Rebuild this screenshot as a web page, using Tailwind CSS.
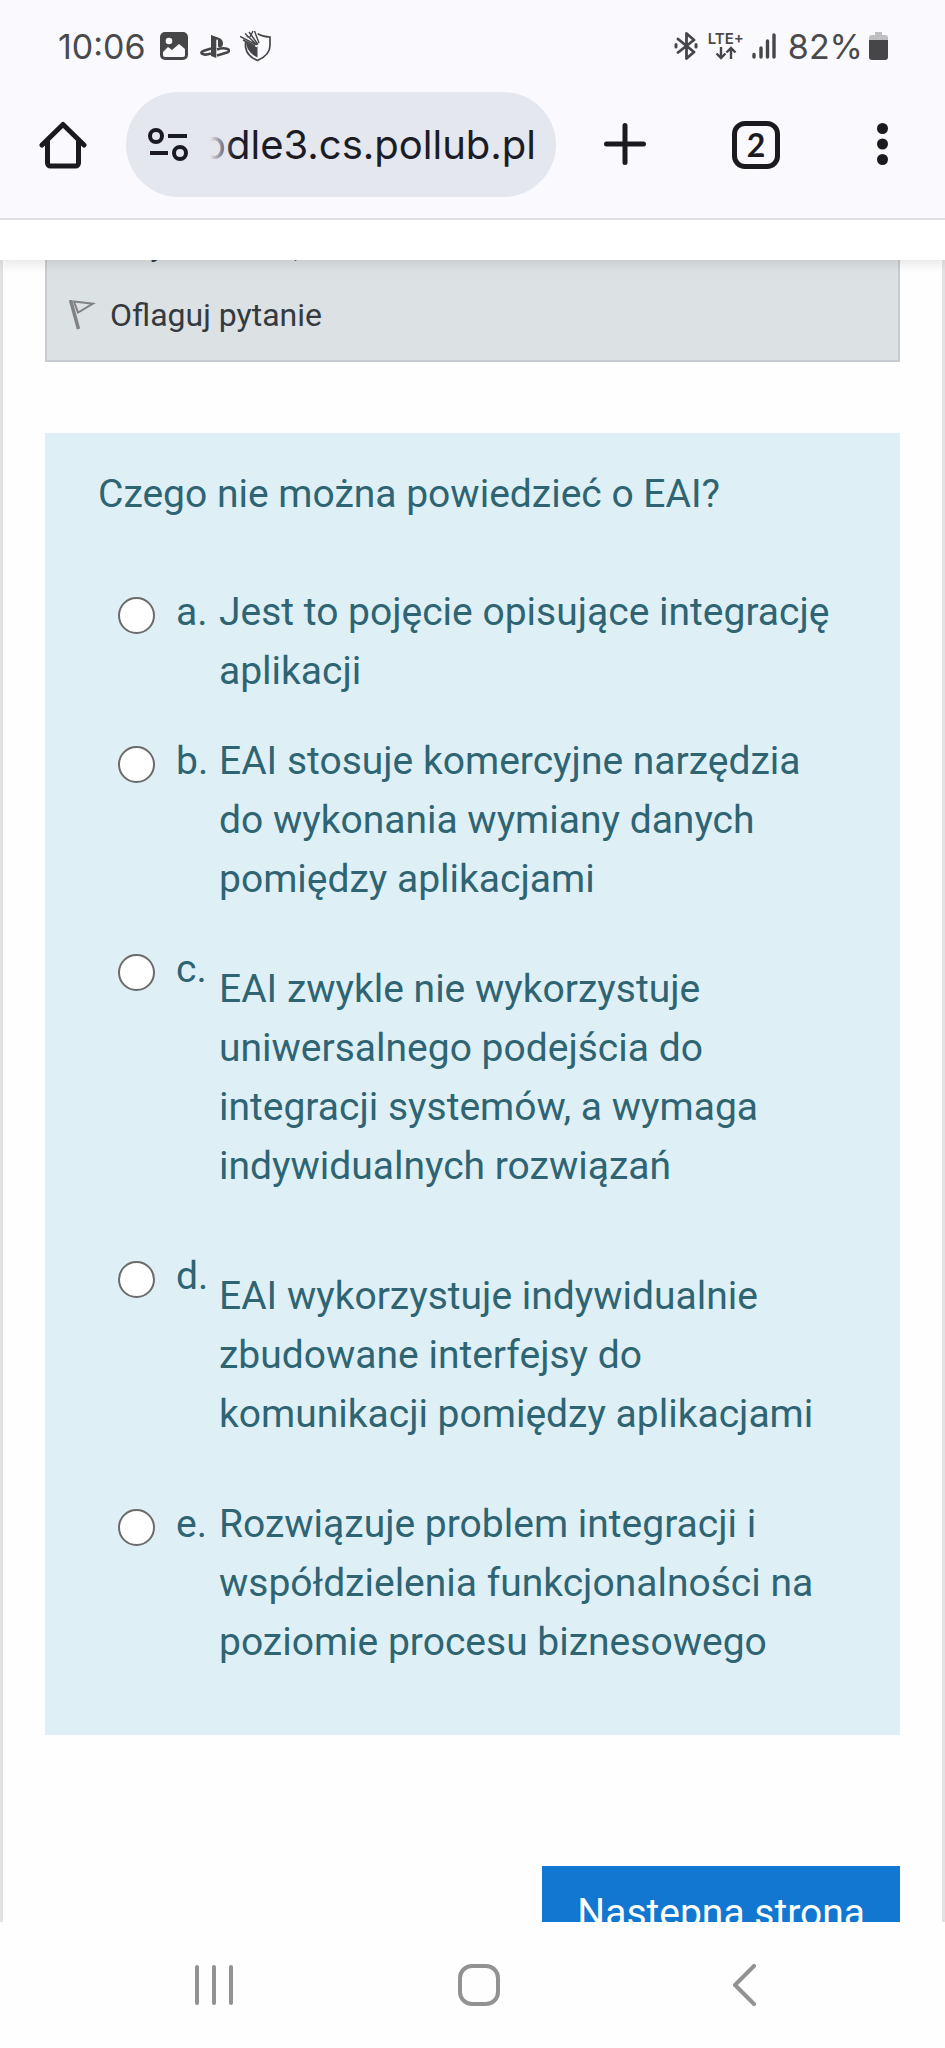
<!DOCTYPE html>
<html lang="pl">
<head>
<meta charset="utf-8">
<meta name="viewport" content="width=device-width, initial-scale=1">
<title>Quiz</title>
<script src="https://cdn.jsdelivr.net/npm/@tailwindcss/browser@4"></script>
</head>
<body class="flex h-screen flex-col overflow-hidden bg-[#fefefe] font-[Roboto,sans-serif]">

<header class="shrink-0 border-b-2 border-[#e2e2ea] bg-[#faf9fe]">
  <!-- Status bar -->
  <div class="flex h-[92px] items-center pr-[57px] pl-[58px] font-[Inter,sans-serif] text-[34px] text-[#4a4a4c]">
    <span>10:06</span>
    <svg class="ml-3.5 h-7 w-7" viewBox="0 0 28 28"><rect width="28" height="28" rx="5" fill="#464648"/><circle cx="9" cy="9" r="3.300" fill="#faf9fe"/><path d="M3 20l5-5 4 3 7-6 6 5v6a2 2 0 0 1-2 2H5a2 2 0 0 1-2-2z" fill="#faf9fe"/></svg>
    <svg class="ml-3 h-7 w-[30px]" viewBox="0 0 30 28"><path d="M11 3l7 2.400c3.500 1.200 5 3 5 6s-2 4.600-5 3.300V8.500c0-1.500-1.700-1.500-1.700 0V26L11 24z" fill="#464648"/><path d="M11 16.500l-7 2.300c-4 1.500-3 3.600 1 3.800 2.500.1 4-.3 6-1M17 17.500c4-1.600 8-1.500 10.500-.5 2.500 1 1.500 2.700-.5 3.500L17 23.500" fill="none" stroke="#464648" stroke-width="2.600"/></svg>
    <svg class="ml-2.5 h-8 w-8" viewBox="0 0 32 32" fill="none"><path d="M5.500 11v6c1 6 5.500 11 12 13.500C25.500 27 30 22.500 30 15.500V7c-4.500 0-8.500-1-12-3-3.500 2-8 3.500-12.500 3.500z" stroke="#464648" stroke-width="1.700"/><path d="M6 11l11.500 5v11.500C11 24.500 6 19 6 11z" fill="#464648"/><path d="M1.500 7.500L18 15M8 3l9 12M14.500 2l3.500 13" stroke="#faf9fe" stroke-width="5"/><path d="M0 6.500l16 8M5 3.500l12 11.500M9 2l9 12.500M14.500 1l4.500 12M3 10l12 6M13 1l-3 6" stroke="#464648" stroke-width="1.400"/></svg>

    <svg class="ml-auto h-7 w-6" viewBox="0 0 24 28" fill="none" stroke="#464648" stroke-width="2.800" stroke-linejoin="round" stroke-linecap="round"><path d="M4 7l16 13-7.500 6.500V1.500L20 8 4 20.500"/><path d="M2 12.500v2.500M22 12.500v2.500" stroke-width="3"/></svg>
    <div class="ml-2.5 flex w-9 flex-col items-center">
      <span class="h-3.5 text-[15px] leading-[14px] font-semibold">LTE+</span>
      <svg class="h-3.5 w-[22px]" viewBox="0 0 22 14" fill="none" stroke="#464648" stroke-width="2.400"><path d="M6 1v11M1.500 7.500L6 12l4.500-4.500M16 13V2M11.500 6.500L16 2l4.500 4.500"/></svg>
    </div>
    <svg class="ml-2 h-7 w-6" viewBox="0 0 24 28" stroke="#464648" stroke-width="3.400" stroke-linecap="round"><path d="M2 22.500v2.500M9 16v9M15.500 9v16M22 3v22"/></svg>
    <span class="ml-3">82%</span>
    <svg class="ml-1.5 h-7 w-[19px]" viewBox="0 0 19 28"><path d="M6 0h7v3h3a3 3 0 0 1 3 3v3H0V6a3 3 0 0 1 3-3h3z" fill="#bfbfc2"/><path d="M0 8h19v17a3 3 0 0 1-3 3H3a3 3 0 0 1-3-3z" fill="#464648"/></svg>
  </div>

  <!-- Browser toolbar -->
  <div class="flex h-[126px] items-start pr-[57px] pl-[39px]">
    <button type="button" aria-label="Strona główna" class="mt-[29px]"><svg class="h-12 w-12" viewBox="0 0 48 48" fill="none" stroke="#1a1a20" stroke-width="5" stroke-linecap="round" stroke-linejoin="round"><path d="M3 24L24 3.500 45 24M8.500 21v21a3 3 0 0 0 3 3h25a3 3 0 0 0 3-3V21"/></svg></button>
    <div class="ml-[39px] flex h-[105px] min-w-0 flex-1 items-center rounded-full bg-[#e5e7ef] pl-[22px]">
      <svg class="h-9 w-10 shrink-0" viewBox="0 0 40 36" fill="none" stroke="#1a1a20" stroke-width="4"><circle cx="8" cy="9" r="6"/><path d="M20 9h19M2 26h18"/><circle cx="32" cy="26" r="6"/></svg>
      <div class="relative ml-[22px] flex min-w-0 flex-1 justify-end overflow-hidden pr-5">
        <span class="font-[Inter,sans-serif] text-[40px] leading-[60px] whitespace-nowrap text-[#1c1c26]">moodle3.cs.pollub.pl</span>
        <span class="absolute inset-y-0 left-0 w-6 bg-linear-to-r from-[#e5e7ef] to-transparent"></span>
      </div>
    </div>
    <button type="button" aria-label="Nowa karta" class="mt-[31px] ml-12"><svg class="h-[42px] w-[42px]" viewBox="0 0 42 42" stroke="#1a1a20" stroke-width="5" stroke-linecap="round"><path d="M21 2.500v37M2.500 21h37"/></svg></button>
    <button type="button" aria-label="Karty" class="mt-[29px] ml-[86px] flex h-12 w-12 items-center justify-center rounded-[13px] border-[5px] border-[#1a1a20] font-[Lato,sans-serif] text-[32px] leading-none font-bold text-[#1a1a20]">2</button>
    <button type="button" aria-label="Menu" class="mt-[31px] ml-[97px]"><svg class="h-[42px] w-[11px]" viewBox="0 0 11 42" fill="#1a1a20"><circle cx="5.500" cy="5.500" r="5.500"/><circle cx="5.500" cy="21" r="5.500"/><circle cx="5.500" cy="36.500" r="5.500"/></svg></button>
  </div>
</header>

<div class="z-10 h-10 shrink-0 bg-white shadow-[0_5px_10px_rgba(0,0,0,0.09)]"></div>

<main class="min-h-0 flex-1 overflow-hidden border-x-[3px] border-[#e2e2e4] bg-[#fefefe] px-[42px]">
  <section class="-mt-10 border-2 border-[#c8ccd0] bg-[#dce1e4] px-[21px] pb-[22px] text-[32px] leading-[46px] text-[#343a40]">
    <div class="pb-6">Punkty maks.: 1,00</div>
    <a href="#" class="flex items-center">
      <svg class="mr-3.5 h-[30px] w-7" viewBox="0 0 28 30" fill="none" stroke="#808285" stroke-width="2"><path d="M2.500 0l8 29" stroke-width="3.500"/><path d="M6 1.500l19 2.200L10 12.500z"/></svg>
      <span>Oflaguj pytanie</span>
    </a>
  </section>

  <form class="mt-[71px] bg-[#def0f6] pt-[32px] pr-[52px] pb-[63px] pl-[53px] text-[39px] leading-[59px] text-[#2f6473]">
    <p>Czego nie można powiedzieć o EAI?</p>
    <div class="mt-[59px] flex flex-col gap-[31px] pl-5">
      <div class="flex items-start">
        <input type="radio" name="answer" id="a" aria-labelledby="la" class="mt-3.5 mr-[21px] size-[37px] shrink-0 appearance-none rounded-full border-2 border-[#6b6b6b] bg-white checked:border-[12px]">
        <label for="a" id="la" class="flex"><span class="w-[43px] shrink-0">a.</span><span>Jest to pojęcie opisujące integrację aplikacji</span></label>
      </div>
      <div class="flex items-start">
        <input type="radio" name="answer" id="b" aria-labelledby="lb" class="mt-3.5 mr-[21px] size-[37px] shrink-0 appearance-none rounded-full border-2 border-[#6b6b6b] bg-white checked:border-[12px]">
        <label for="b" id="lb" class="flex"><span class="w-[43px] shrink-0">b.</span><span>EAI stosuje komercyjne narzędzia do wykonania wymiany danych pomiędzy aplikacjami</span></label>
      </div>
      <div class="flex items-start">
        <input type="radio" name="answer" id="c" aria-labelledby="lc" class="mt-3.5 mr-[21px] size-[37px] shrink-0 appearance-none rounded-full border-2 border-[#6b6b6b] bg-white checked:border-[12px]">
        <label for="c" id="lc" class="flex"><span class="w-[43px] shrink-0">c.</span><span class="py-5">EAI zwykle nie wykorzystuje uniwersalnego podejścia do integracji systemów, a wymaga indywidualnych rozwiązań</span></label>
      </div>
      <div class="flex items-start">
        <input type="radio" name="answer" id="d" aria-labelledby="ld" class="mt-3.5 mr-[21px] size-[37px] shrink-0 appearance-none rounded-full border-2 border-[#6b6b6b] bg-white checked:border-[12px]">
        <label for="d" id="ld" class="flex"><span class="w-[43px] shrink-0">d.</span><span class="py-5">EAI wykorzystuje indywidualnie zbudowane interfejsy do komunikacji pomiędzy aplikacjami</span></label>
      </div>
      <div class="flex items-start">
        <input type="radio" name="answer" id="e" aria-labelledby="le" class="mt-3.5 mr-[21px] size-[37px] shrink-0 appearance-none rounded-full border-2 border-[#6b6b6b] bg-white checked:border-[12px]">
        <label for="e" id="le" class="flex"><span class="w-[43px] shrink-0">e.</span><span>Rozwiązuje problem integracji i współdzielenia funkcjonalności na poziomie procesu biznesowego</span></label>
      </div>
    </div>
  </form>

  <div class="mt-[131px] flex justify-end">
    <button type="button" class="bg-[#1177d1] px-[35px] py-[18px] text-[39px] leading-[59px] whitespace-nowrap text-white">Następna strona</button>
  </div>
</main>

<!-- System navigation -->
<nav class="z-10 grid h-[126px] shrink-0 grid-cols-3 place-items-center bg-[#fefefe] pr-[69px] pl-[81px]">
  <button type="button" aria-label="Ostatnie"><svg class="h-10 w-[38px]" viewBox="0 0 38 40" stroke="#929292" stroke-width="4" stroke-linecap="round"><path d="M2 2v36M19 2v36M36 2v36"/></svg></button>
  <button type="button" aria-label="Ekran główny"><svg class="h-[42px] w-[42px]" viewBox="0 0 42 42" fill="none" stroke="#929292" stroke-width="4"><rect x="2" y="2" width="38" height="38" rx="12"/></svg></button>
  <button type="button" aria-label="Wstecz"><svg class="h-[42px] w-6" viewBox="0 0 24 42" fill="none" stroke="#929292" stroke-width="4" stroke-linecap="round" stroke-linejoin="round"><path d="M22 2L3 21l19 19"/></svg></button>
</nav>
</body>
</html>
